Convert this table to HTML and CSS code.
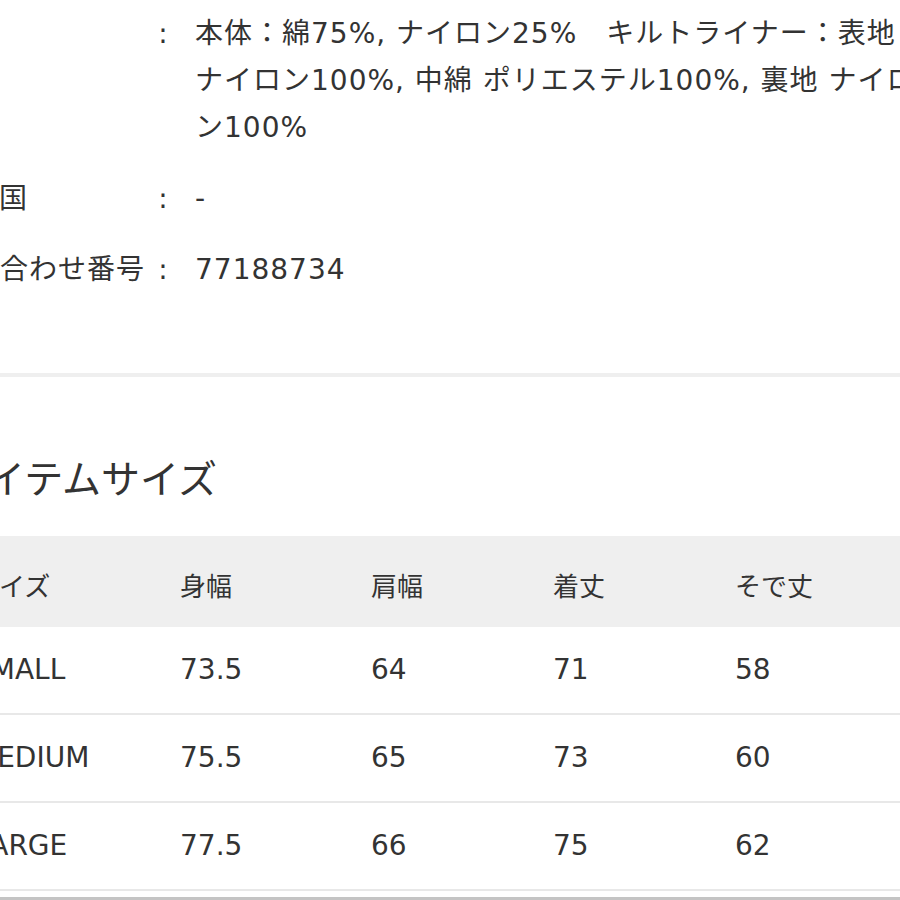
FILE: index.html
```html
<!DOCTYPE html>
<html lang="ja">
<head>
<meta charset="utf-8">
<title>アイテム詳細</title>
<link rel="stylesheet" href="styles.css">
</head>
<body>
<div class="page">
  <dl class="specs">
    <dt class="spec-label">素材</dt>
    <dd class="spec-colon">:</dd>
    <dd class="spec-value">本体：綿75%, ナイロン25%　キルトライナー：表地 ナイロン100%, 中綿 ポリエステル100%, 裏地 ナイロン100%</dd>

    <dt class="spec-label spec-label--indent">原産国</dt>
    <dd class="spec-colon">:</dd>
    <dd class="spec-value">-</dd>

    <dt class="spec-label">お問い合わせ番号</dt>
    <dd class="spec-colon">:</dd>
    <dd class="spec-value">77188734</dd>
  </dl>

  <hr class="divider">

  <h2 class="section-title">アイテムサイズ</h2>

  <table class="size-table">
    <colgroup>
      <col class="col-size">
      <col class="col-a">
      <col class="col-b">
      <col class="col-b">
      <col>
    </colgroup>
    <thead>
      <tr><th>サイズ</th><th>身幅</th><th>肩幅</th><th>着丈</th><th>そで丈</th></tr>
    </thead>
    <tbody>
      <tr><td>SMALL</td><td>73.5</td><td>64</td><td>71</td><td>58</td></tr>
      <tr><td>MEDIUM</td><td>75.5</td><td>65</td><td>73</td><td>60</td></tr>
      <tr><td>LARGE</td><td>77.5</td><td>66</td><td>75</td><td>62</td></tr>
    </tbody>
  </table>

  <div class="footer-rule"></div>
</div>
</body>
</html>
```
FILE: styles.css
```css
html, body {
  margin: 0;
  padding: 0;
  overflow: hidden;
  background: #ffffff;
}

body {
  font-family: "DejaVu Sans", "Noto Sans CJK JP", sans-serif;
  color: #333333;
}

.page {
  margin-left: -51px;
  width: 1000px;
  padding-top: 10px;
}

.specs {
  margin: 0 0 0 -36px;
  display: grid;
  grid-template-columns: 237px 26px 749px;
  row-gap: 24px;
  font-size: 28px;
  line-height: 47px;
  letter-spacing: 1px;
}

.spec-label {
  margin: 0;
  white-space: nowrap;
}

.spec-label--indent {
  padding-left: 1em;
}

.spec-colon {
  margin: 0;
  text-align: center;
  letter-spacing: 0;
}

.spec-value {
  margin: 0;
  padding-left: 19px;
}

.divider {
  border: 0;
  border-top: 4px solid #efefef;
  margin: 80px 0 0;
  height: 0;
}

.section-title {
  margin: 78px 0 31px;
  font-size: 39px;
  line-height: 50px;
  font-weight: normal;
  color: #333333;
}

.size-table {
  width: 1000px;
  table-layout: fixed;
  border-collapse: collapse;
}

.col-size { width: 231px; }
.col-a { width: 191px; }
.col-b { width: 182px; }

.size-table th {
  background: #efefef;
  padding: 33px 0 22px;
  font-size: 26px;
  line-height: 36px;
  font-weight: normal;
  text-align: left;
  color: #333333;
}

.size-table td {
  padding: 25px 0;
  font-size: 28px;
  line-height: 36px;
  text-align: left;
  border-bottom: 2px solid #e8e8e8;
  white-space: nowrap;
}

.size-table th:first-child,
.size-table td:first-child {
  padding-left: 24px;
}

.footer-rule {
  margin-top: 6px;
  border-top: 3px solid #c4c4c4;
}
```
